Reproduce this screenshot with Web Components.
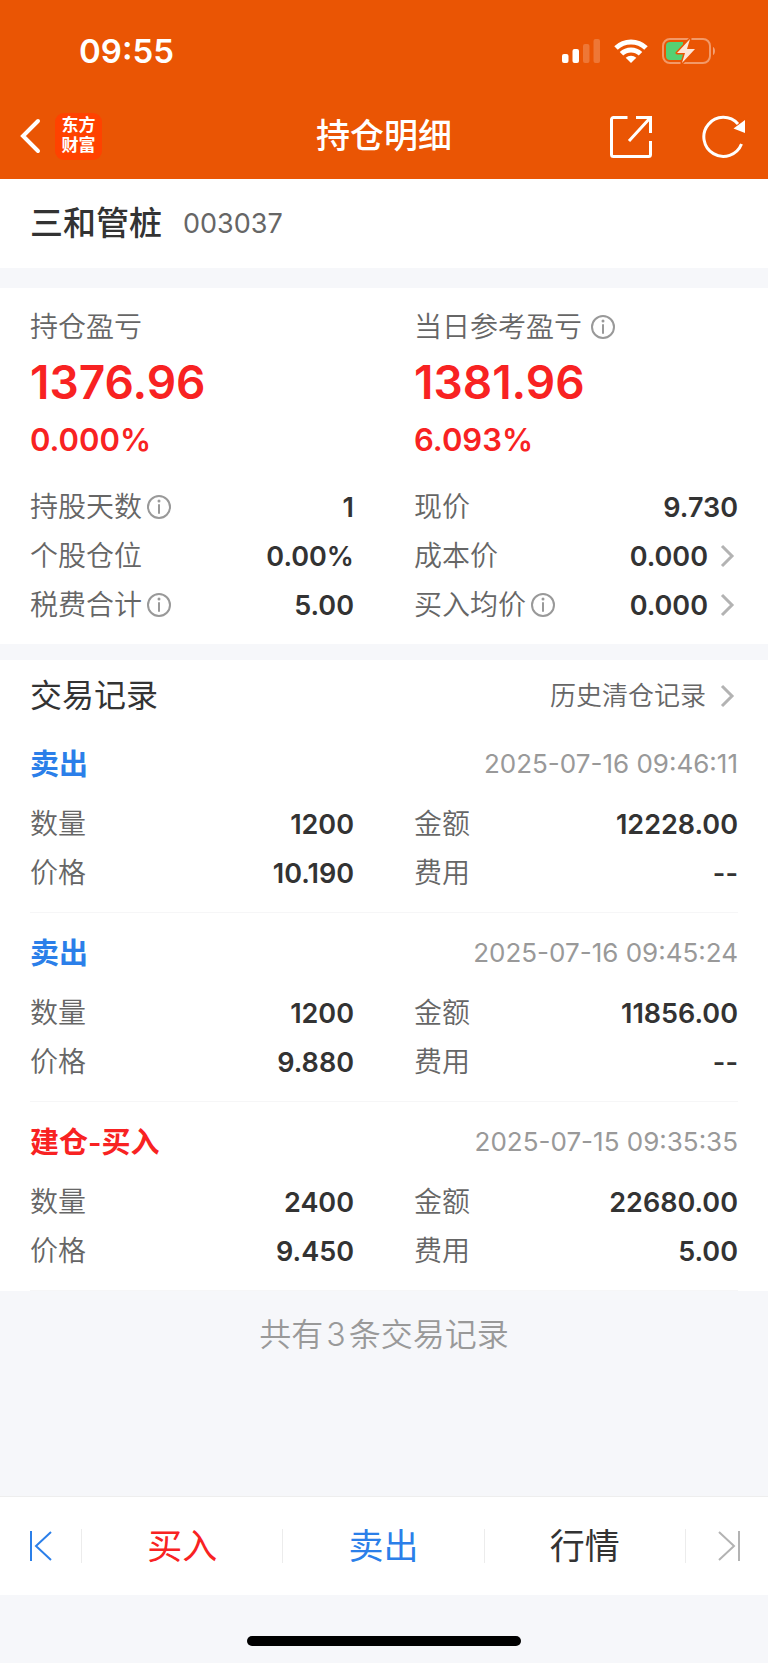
<!DOCTYPE html>
<html lang="zh-CN">
<head>
<meta charset="utf-8">
<meta name="viewport" content="width=device-width, initial-scale=1">
<title>持仓明细</title>
<style>
  :root {
    --color-brand: #ea5504;
    --color-surface: #fff;
    --color-page: #f6f7fa;
    --color-text: #333;
    --color-label: #666;
    --color-muted: #999;
    --color-up: #f82222;
    --color-sell: #2b7fe9;
    --color-line: #f6f6f7;
    --gutter: 30px;
    --row: 48px;
  }

  body {
    margin: 0;
    background: var(--color-page);
    color: var(--color-text);
    font-family: Inter, "Noto Sans CJK SC", sans-serif;
    font-size: 28px;
    line-height: 1;
  }

  .count { margin: 0 3px; }
</style>
</head>
<body>

<app-page>
  <status-bar slot="top" time="09:55"></status-bar>
  <nav-bar slot="top">持仓明细</nav-bar>

  <stock-title code="003037">三和管桩</stock-title>

  <position-summary>
    <profit-figure slot="profit" label="持仓盈亏" amount="1376.96" rate="0.000%"></profit-figure>
    <profit-figure slot="profit" label="当日参考盈亏" amount="1381.96" rate="6.093%" info></profit-figure>
    <metric-row label="持股天数" info>1</metric-row>
    <metric-row label="现价">9.730</metric-row>
    <metric-row label="个股仓位">0.00%</metric-row>
    <metric-row label="成本价" href="#cost">0.000</metric-row>
    <metric-row label="税费合计" info>5.00</metric-row>
    <metric-row label="买入均价" info href="#average">0.000</metric-row>
  </position-summary>

  <trade-list heading="交易记录" more="历史清仓记录">
    <trade-record side="sell" time="2025-07-16 09:46:11" count="1200" amount="12228.00" price="10.190" fee="--">卖出</trade-record>
    <trade-record side="sell" time="2025-07-16 09:45:24" count="1200" amount="11856.00" price="9.880" fee="--">卖出</trade-record>
    <trade-record side="buy" time="2025-07-15 09:35:35" count="2400" amount="22680.00" price="9.450" fee="5.00">建仓-买入</trade-record>
    <span slot="footer">共有<span class="count">3</span>条交易记录</span>
  </trade-list>

  <trade-toolbar slot="bottom"></trade-toolbar>
  <home-indicator slot="bottom"></home-indicator>
</app-page>

<script>
/** Fills an open shadow root from a markup string. */
function render(host, html) {
  if (host.shadowRoot) return;
  const template = document.createElement('template');
  template.innerHTML = html;
  host.attachShadow({ mode: 'open' }).appendChild(template.content.cloneNode(true));
}

const chevron = `
  <svg class="chevron" width="18" height="24" viewBox="0 0 18 24" fill="none"
       stroke="#b3b3b3" stroke-width="3" aria-hidden="true">
    <path d="M2 2l10 10L2 22"/>
  </svg>`;

const infoButton = (label) => `
  <button class="info" type="button" aria-label="${label}说明">
    <svg width="24" height="24" viewBox="0 0 24 24" fill="none" stroke="#999" stroke-width="2">
      <circle cx="12" cy="12" r="11"/>
      <path d="M12 10v8" stroke-linecap="round"/>
      <circle cx="12" cy="6" r="1.5" fill="#999" stroke="none"/>
    </svg>
  </button>`;

const infoStyle = `
  .info {
    display: inline-flex;
    padding: 0;
    border: none;
    background: none;
    cursor: pointer;
  }`;

// ── Page frame ──────────────────────────────────────────────

class AppPage extends HTMLElement {
  connectedCallback() {
    render(this, `
<style>
  :host {
    display: flex;
    flex-direction: column;
    min-height: 100vh;
  }
  header { background: var(--color-brand); color: #fff; }
  main { flex: 1; }
</style>
<header><slot name="top"></slot></header>
<main><slot></slot></main>
<footer><slot name="bottom"></slot></footer>
`);
  }
}

class StatusBar extends HTMLElement {
  connectedCallback() {
    render(this, `
<style>
  :host {
    display: flex;
    align-items: center;
    justify-content: space-between;
    height: 84px;
    padding: 9px 52px 0 79px;
  }
  time { font-size: 33px; font-weight: 600; }
  .icons { display: flex; align-items: center; gap: 14px; }
  svg { display: block; }
</style>
<time>${this.getAttribute('time')}</time>
<div class="icons">
  <svg width="38" height="24" viewBox="0 0 38 24" fill="#fff" role="img" aria-label="信号">
    <rect y="15" width="6.5" height="9" rx="2"/>
    <rect x="10.5" y="10" width="6.5" height="14" rx="2"/>
    <rect x="21" y="5" width="6.5" height="19" rx="2" opacity=".2"/>
    <rect x="31.5" width="6.5" height="24" rx="2" opacity=".2"/>
  </svg>
  <svg width="34" height="24" viewBox="0 0 34 24" fill="none" stroke="#fff" stroke-width="5" role="img" aria-label="无线网络">
    <path d="M2 9A21.5 21.5 0 0 1 32 9"/>
    <path d="M7.5 14.8A13.6 13.6 0 0 1 26.5 14.8"/>
    <path d="M17 24l-5.3-5.3a8 8 0 0 1 10.6 0z" fill="#fff" stroke="none"/>
  </svg>
  <svg width="54" height="26" viewBox="0 0 54 26" role="img" aria-label="正在充电">
    <rect x="1" y="1" width="47" height="24" rx="7" fill="none" stroke="#fff" stroke-opacity=".4" stroke-width="2"/>
    <path d="M51 9c2.6.8 2.6 7.2 0 8z" fill="#fff" fill-opacity=".45"/>
    <path d="M8 4h13v18H8a4 4 0 0 1-4-4V8a4 4 0 0 1 4-4z" fill="#55d072"/>
    <path d="M28 1L15 15h8l-3 10L33 11h-8z" fill="#fde5d8" stroke="#ea5504" stroke-width="3" paint-order="stroke" stroke-linejoin="round"/>
  </svg>
</div>
`);
  }
}

class NavBar extends HTMLElement {
  connectedCallback() {
    render(this, `
<style>
  :host {
    display: grid;
    grid-template-columns: 1fr auto 1fr;
    align-items: center;
    height: 86px;
    padding: 0 20px;
  }
  h1 { margin: 0; font-size: 34px; font-weight: 500; line-height: 36px; }
  .side { display: flex; align-items: center; }
  .back { gap: 14px; }
  .actions { justify-content: flex-end; gap: 48px; }
  button {
    display: block;
    padding: 0;
    border: none;
    background: none;
    cursor: pointer;
  }
  svg { display: block; }
  .logo {
    display: grid;
    place-content: center;
    width: 47px;
    height: 47px;
    border-radius: 9px;
    background: #ff4200;
    color: #fff;
    font: 700 17px/20px "Liberation Sans", "Noto Sans CJK SC", sans-serif;
    text-decoration: none;
  }
  .logo span { display: block; }
</style>
<div class="side back">
  <button type="button" aria-label="返回">
    <svg width="21" height="36" viewBox="0 0 21 36" fill="none" stroke="#fff" stroke-width="4" stroke-linecap="round">
      <path d="M18 3L3 18l15 15"/>
    </svg>
  </button>
  <a class="logo" href="#home"><span>东方</span><span>财富</span></a>
</div>
<h1><slot></slot></h1>
<div class="side actions">
  <button type="button" aria-label="分享">
    <svg width="44" height="44" viewBox="1 -1 44 44" fill="none" stroke="#fff" stroke-width="3">
      <path d="M18.5 2.5H4.5a2 2 0 0 0-2 2v35a2 2 0 0 0 2 2h35a2 2 0 0 0 2-2V26"/>
      <path d="M27 2.5h14.5V18M41.5 2.5L20 26"/>
    </svg>
  </button>
  <button type="button" aria-label="刷新">
    <svg width="46" height="44" viewBox="1 -1 46 44" fill="none" stroke="#fff" stroke-width="3">
      <path d="M40.5 29A19.5 19.5 0 1 1 37 9"/>
      <path d="M44 5v13L32.5 13.5z" fill="#fff" stroke="none"/>
    </svg>
  </button>
</div>
`);
  }
}

// ── Position ────────────────────────────────────────────────

class StockTitle extends HTMLElement {
  connectedCallback() {
    render(this, `
<style>
  :host {
    display: flex;
    align-items: center;
    gap: 21px;
    height: 89px;
    padding: 0 var(--gutter);
    background: var(--color-surface);
  }
  h2 { margin: 0; font-size: 33px; font-weight: 500; }
  span { color: var(--color-label); font-size: 27px; }
</style>
<h2><slot></slot></h2>
<span>${this.getAttribute('code')}</span>
`);
  }
}

class PositionSummary extends HTMLElement {
  connectedCallback() {
    render(this, `
<style>
  :host {
    display: block;
    margin: 20px 0 16px;
    padding: 15px var(--gutter);
    background: var(--color-surface);
  }
  .profit, .metrics {
    display: grid;
    grid-template-columns: 1fr 1fr;
    column-gap: 60px;
  }
  .metrics { row-gap: 1px; margin-top: 16px; }
</style>
<div class="profit"><slot name="profit"></slot></div>
<div class="metrics"><slot></slot></div>
`);
  }
}

class ProfitFigure extends HTMLElement {
  connectedCallback() {
    const label = this.getAttribute('label');
    render(this, `
<style>
  :host { display: block; }
  .label {
    display: flex;
    align-items: center;
    gap: 9px;
    height: var(--row);
    color: var(--color-label);
    font-weight: 350;
  }
  .amount, .rate { color: var(--color-up); font-weight: 600; }
  .amount { font-size: 46px; line-height: 62px; }
  .rate { font-size: 31px; line-height: 54px; }
  ${infoStyle}
</style>
<div class="label"><span>${label}</span>${this.hasAttribute('info') ? infoButton(label) : ''}</div>
<div class="amount">${this.getAttribute('amount')}</div>
<div class="rate">${this.getAttribute('rate')}</div>
`);
  }
}

class MetricRow extends HTMLElement {
  connectedCallback() {
    const label = this.getAttribute('label');
    const href = this.getAttribute('href');
    const value = href
      ? `<a class="value" href="${href}"><slot></slot>${chevron}</a>`
      : '<span class="value"><slot></slot></span>';
    render(this, `
<style>
  :host {
    display: flex;
    align-items: center;
    justify-content: space-between;
    height: var(--row);
  }
  .label {
    display: flex;
    align-items: center;
    gap: 5px;
    color: var(--color-label);
    font-weight: 350;
  }
  .value {
    display: flex;
    align-items: center;
    gap: 12px;
    color: var(--color-text);
    font-size: 27px;
    font-weight: 600;
    text-decoration: none;
  }
  ${infoStyle}
</style>
<span class="label">${label}${this.hasAttribute('info') ? infoButton(label) : ''}</span>
${value}
`);
  }
}

// ── Trades ──────────────────────────────────────────────────

class TradeList extends HTMLElement {
  connectedCallback() {
    render(this, `
<style>
  :host { display: block; }
  section { background: var(--color-surface); }
  .head {
    display: flex;
    align-items: center;
    justify-content: space-between;
    height: 56px;
    padding: 8px var(--gutter) 0;
  }
  h2 { margin: 0; font-size: 32px; font-weight: 400; }
  a {
    display: flex;
    align-items: center;
    gap: 14px;
    color: var(--color-label);
    font-size: 26px;
    font-weight: 350;
    text-decoration: none;
  }
  .total {
    margin: 0;
    padding: 20px 0;
    color: var(--color-muted);
    font-size: 32px;
    font-weight: 350;
    line-height: 48px;
    text-align: center;
  }
</style>
<section>
  <div class="head">
    <h2>${this.getAttribute('heading')}</h2>
    <a href="#history">${this.getAttribute('more')}${chevron}</a>
  </div>
  <slot></slot>
</section>
<p class="total"><slot name="footer"></slot></p>
`);
  }
}

class TradeRecord extends HTMLElement {
  connectedCallback() {
    const attr = (name) => this.getAttribute(name);
    render(this, `
<style>
  :host {
    display: block;
    margin: 0 var(--gutter);
    padding: 20px 0 15px;
    border-bottom: 1px solid var(--color-line);
  }
  .head {
    display: flex;
    align-items: center;
    justify-content: space-between;
    height: 40px;
    margin-bottom: 16px;
  }
  h3 { margin: 0; color: var(--color-up); font-size: 29px; font-weight: 600; }
  :host([side="sell"]) h3 { color: var(--color-sell); }
  time { color: var(--color-muted); font-size: 26px; }
  .rows {
    display: grid;
    grid-template-columns: 1fr 1fr;
    gap: 1px 60px;
  }
</style>
<div class="head">
  <h3><slot></slot></h3>
  <time>${attr('time')}</time>
</div>
<div class="rows">
  <metric-row label="数量">${attr('count')}</metric-row>
  <metric-row label="金额">${attr('amount')}</metric-row>
  <metric-row label="价格">${attr('price')}</metric-row>
  <metric-row label="费用">${attr('fee')}</metric-row>
</div>
`);
  }
}

// ── Bottom ──────────────────────────────────────────────────

class TradeToolbar extends HTMLElement {
  connectedCallback() {
    render(this, `
<style>
  :host {
    display: flex;
    align-items: center;
    height: 98px;
    border-top: 1px solid #eee;
    background: var(--color-surface);
  }
  button {
    display: flex;
    flex: 1;
    align-items: center;
    justify-content: center;
    height: 34px;
    padding: 0;
    border: none;
    border-right: 1px solid #ececec;
    background: none;
    color: inherit;
    font: inherit;
    font-size: 35px;
    cursor: pointer;
  }
  button:last-child { border-right: none; }
  .step { box-sizing: border-box; flex: 0 0 82px; }
  .step:first-child { padding-right: 8px; }
  .step:last-child { padding-left: 4px; }
  .buy { color: var(--color-up); }
  .sell { color: var(--color-sell); }
</style>
<button class="step" type="button" aria-label="上一只">
  <svg width="24" height="32" viewBox="0 0 24 32" fill="none" stroke="#2b7fe9" stroke-width="2">
    <path d="M2 1v30M22 2L7 16l15 14"/>
  </svg>
</button>
<button class="buy" type="button">买入</button>
<button class="sell" type="button">卖出</button>
<button type="button">行情</button>
<button class="step" type="button" aria-label="下一只" disabled>
  <svg width="24" height="32" viewBox="0 0 24 32" fill="none" stroke="#b3b3b3" stroke-width="2">
    <path d="M22 1v30M2 2l15 14L2 30"/>
  </svg>
</button>
`);
  }
}

class HomeIndicator extends HTMLElement {
  connectedCallback() {
    render(this, `
<style>
  :host {
    display: flex;
    align-items: flex-end;
    justify-content: center;
    height: 51px;
    padding-bottom: 17px;
  }
  div { width: 274px; height: 10px; border-radius: 5px; background: #000; }
</style>
<div></div>
`);
  }
}

customElements.define('app-page', AppPage);
customElements.define('status-bar', StatusBar);
customElements.define('nav-bar', NavBar);
customElements.define('stock-title', StockTitle);
customElements.define('position-summary', PositionSummary);
customElements.define('profit-figure', ProfitFigure);
customElements.define('metric-row', MetricRow);
customElements.define('trade-list', TradeList);
customElements.define('trade-record', TradeRecord);
customElements.define('trade-toolbar', TradeToolbar);
customElements.define('home-indicator', HomeIndicator);
</script>
</body>
</html>
